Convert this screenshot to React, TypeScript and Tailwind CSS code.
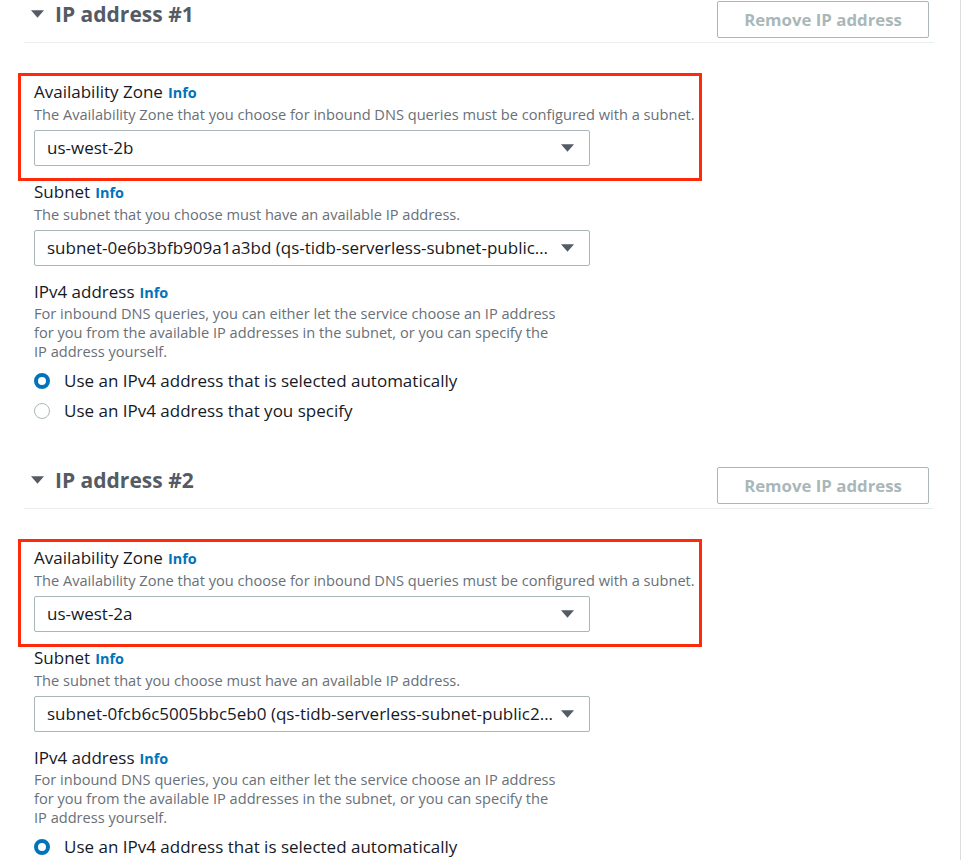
import React from 'react';

const font = { fontFamily: '"Open Sans", "Noto Sans", Arial, sans-serif' };

function Caret({ className }: { className?: string }) {
  return (
    <svg viewBox="0 0 14 8" className={className} aria-hidden>
      <path d="M0 0h14L7 8z" fill="currentColor" />
    </svg>
  );
}

function Info() {
  return <span className="ml-[5px] text-[14.4px] font-bold text-[#0073bb]">Info</span>;
}

function Select({ value }: { value: string }) {
  return (
    <div className="mt-[6px] flex h-[36px] w-[556px] items-center rounded-[2px] border border-[#aab7b8] bg-white pl-[12px] pr-[15px]">
      <span className="min-w-0 flex-1 truncate text-[17px] text-[#16191f]">{value}</span>
      <Caret className="ml-[6px] h-[8px] w-[13px] shrink-0 text-[#545b64]" />
    </div>
  );
}

function Field({ label, description, value }: { label: string; description: string; value: string }) {
  return (
    <div>
      <div className="flex items-baseline text-[17px] leading-[22px] text-[#16191f]">
        {label}
        <Info />
      </div>
      <p className="text-[14.6px] leading-[20px] text-[#687078]">{description}</p>
      <Select value={value} />
    </div>
  );
}

function Radio({ checked, label }: { checked?: boolean; label: string }) {
  return (
    <label className="flex h-[30px] items-center">
      {checked ? (
        <span className="h-[16px] w-[16px] rounded-full border-[4px] border-[#0073bb] bg-white" />
      ) : (
        <span className="h-[16px] w-[16px] rounded-full border border-[#aab7b8] bg-white" />
      )}
      <span className="ml-[14px] text-[17px] text-[#16191f]">{label}</span>
    </label>
  );
}

function IpSection({ n, zone, subnet }: { n: number; zone: string; subnet: string }) {
  return (
    <section>
      <div className="flex items-start justify-between border-b border-[#eaeded] pb-[4px] pl-[7px] pr-[5px]">
        <div className="flex h-[28px] items-center">
          <Caret className="h-[8px] w-[13px] text-[#545b64]" />
          <h2 className="ml-[11px] text-[21px] font-bold leading-[28px] text-[#545b64]">IP address #{n}</h2>
        </div>
        <button className="mt-[1px] h-[37px] w-[212px] rounded-[2px] border border-[#aab7b8] bg-white text-[16.8px] font-bold text-[#aab7b8]">
          Remove IP address
        </button>
      </div>

      {/* red highlight around the zone picker */}
      <div className="-ml-[6px] mt-[30px] w-[684px] border-[3px] border-[#ff2a0a] pb-[12px] pl-[13px] pt-[5px]">
        <Field
          label="Availability Zone"
          description="The Availability Zone that you choose for inbound DNS queries must be configured with a subnet."
          value={zone}
        />
      </div>

      <div className="pl-[10px]">
        <Field
          label="Subnet"
          description="The subnet that you choose must have an available IP address."
          value={subnet}
        />
        <div className="mt-[15px]">
          <div className="flex items-baseline text-[17px] leading-[22px] text-[#16191f]">
            IPv4 address
            <Info />
          </div>
          <p className="w-[560px] text-[14.6px] leading-[19px] text-[#687078]">
            For inbound DNS queries, you can either let the service choose an IP address
            <br />
            for you from the available IP addresses in the subnet, or you can specify the
            <br />
            IP address yourself.
          </p>
        </div>
        <div className="mt-[5px]">
          <Radio checked label="Use an IPv4 address that is selected automatically" />
          <Radio label="Use an IPv4 address that you specify" />
        </div>
      </div>
    </section>
  );
}

export default function App() {
  return (
    <div style={font} className="h-[860px] w-[961px] overflow-hidden border-r border-[#dcdcdc] bg-white">
      <div className="pl-[24px] pr-[26px]">
        <IpSection n={1} zone="us-west-2b" subnet="subnet-0e6b3bfb909a1a3bd (qs-tidb-serverless-subnet-public1-us-west-2b)" />
        <div className="mt-[40px]">
          <IpSection n={2} zone="us-west-2a" subnet="subnet-0fcb6c5005bbc5eb0 (qs-tidb-serverless-subnet-public2-us-west-2a)" />
        </div>
      </div>
    </div>
  );
}
